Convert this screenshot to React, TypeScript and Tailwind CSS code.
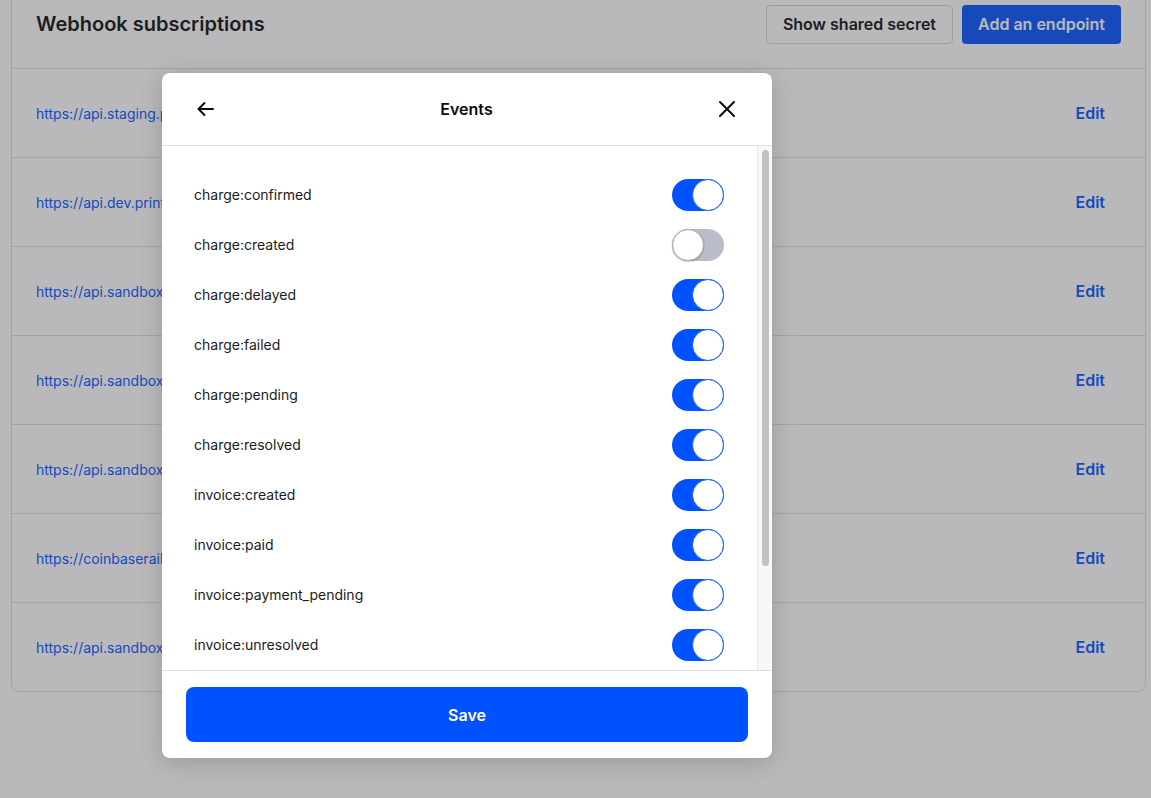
import React from "react";

const endpoints = [
  "https://api.staging.printfulapp.com/webhooks/coinbase",
  "https://api.dev.printfulapp.com/webhooks/coinbase",
  "https://api.sandbox.printfulapp.com/webhooks/commerce",
  "https://api.sandbox.printfulapp.com/webhooks/charges",
  "https://api.sandbox.printfulapp.com/webhooks/invoices",
  "https://coinbaserailsapp.ngrok.io/webhooks",
  "https://api.sandbox.printfulapp.com/webhooks/test",
];

const events: { name: string; on: boolean }[] = [
  { name: "charge:confirmed", on: true },
  { name: "charge:created", on: false },
  { name: "charge:delayed", on: true },
  { name: "charge:failed", on: true },
  { name: "charge:pending", on: true },
  { name: "charge:resolved", on: true },
  { name: "invoice:created", on: true },
  { name: "invoice:paid", on: true },
  { name: "invoice:payment_pending", on: true },
  { name: "invoice:unresolved", on: true },
];

function Toggle({ on }: { on: boolean }) {
  return (
    <div
      className={
        on
          ? "flex h-[32px] w-[52px] items-center justify-end rounded-full bg-[#0052ff]"
          : "flex h-[32px] w-[52px] items-center justify-start rounded-full bg-[#b8bdc7]"
      }
    >
      <div
        className={
          on
            ? "h-[32px] w-[32px] rounded-full border border-[#1f63ff] bg-white"
            : "h-[32px] w-[32px] rounded-full border border-[#a0a5ae] bg-white shadow-[0_1px_2px_rgba(0,0,0,0.2)]"
        }
      />
    </div>
  );
}

export default function App() {
  return (
    <div className="relative h-[798px] overflow-hidden bg-white font-['Inter',sans-serif] text-[#0a0b0d]">
      {/* page underneath */}
      <div className="ml-[11px] mr-[5px] -mt-[16px] rounded-lg border border-[#dcdee2]">
        <div className="flex h-[84px] items-center justify-between border-b border-[#dcdee2] pb-[5px] pl-6 pr-6">
          <h2 className="text-[20px] font-semibold">Webhook subscriptions</h2>
          <div className="flex gap-[9px]">
            <button className="h-[39px] rounded border border-[#cfd2d6] bg-white px-4 text-[16px] font-semibold">
              Show shared secret
            </button>
            <button className="h-[39px] rounded bg-[#0052ff] px-4 text-[16px] font-semibold text-white">
              Add an endpoint
            </button>
          </div>
        </div>
        {endpoints.map((url, i) => (
          <div
            key={i}
            className={
              i < endpoints.length - 1
                ? "flex h-[89px] items-center justify-between border-b border-[#dcdee2] pl-6 pr-10"
                : "flex h-[88px] items-center justify-between pl-6 pr-10"
            }
          >
            <span className="block w-[126px] overflow-hidden whitespace-nowrap text-[14px] text-[#0052ff]">
              {url}
            </span>
            <span className="text-[16px] font-semibold text-[#0052ff]">Edit</span>
          </div>
        ))}
      </div>

      {/* overlay */}
      <div className="absolute inset-0 bg-[rgba(61,62,66,0.36)]" />

      {/* modal */}
      <div className="absolute left-[162px] top-[73px] flex h-[685px] w-[610px] flex-col overflow-hidden rounded-lg bg-white shadow-[0_4px_24px_rgba(0,0,0,0.18)]">
        <div className="flex h-[73px] shrink-0 items-center justify-between border-b border-[#dedfe2] pl-[35px] pr-[37px]">
          <svg width="17" height="16" viewBox="0 0 17 16" fill="none" stroke="#0a0b0d" strokeWidth="2" strokeLinecap="round" strokeLinejoin="round">
            <path d="M16 8H1.5M7.5 2L1.5 8l6 6" />
          </svg>
          <h3 className="text-[16px] font-semibold">Events</h3>
          <svg width="16" height="16" viewBox="0 0 16 16" fill="none" stroke="#0a0b0d" strokeWidth="2" strokeLinecap="round">
            <path d="M1 1l14 14M15 1L1 15" />
          </svg>
        </div>
        <div className="flex h-[524px] shrink-0">
          <div className="flex-1 overflow-hidden pl-8 pr-[33px] pt-[24px]">
            {events.map((e) => (
              <div key={e.name} className="flex h-[50px] items-center justify-between">
                <span className="-mt-[2px] text-[14px] text-[#1a1b1d]">{e.name}</span>
                <Toggle on={e.on} />
              </div>
            ))}
          </div>
          <div className="w-[15px] border-l border-[#e6e6e6] bg-[#f8f8f8] pt-[4px]">
            <div className="mx-auto h-[416px] w-[7px] rounded-full bg-[#c1c1c1]" />
          </div>
        </div>
        <div className="border-t border-[#dedfe2] px-6 pb-4 pt-4">
          <button className="h-[55px] w-full rounded-lg bg-[#0052ff] text-[16px] font-semibold text-white">
            Save
          </button>
        </div>
      </div>
    </div>
  );
}
